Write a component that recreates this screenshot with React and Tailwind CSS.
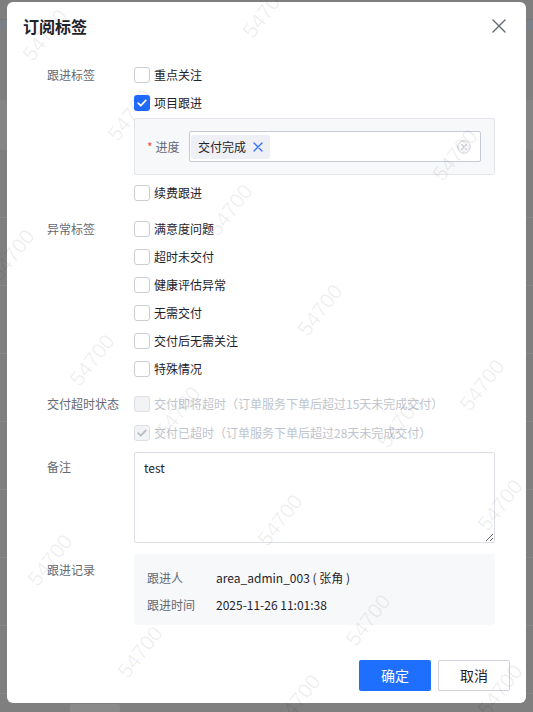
import { useState } from "react";

const marks = [
  [45, 35], [265, 12], [130, 115], [455, 155], [230, 210], [12, 255],
  [320, 310], [92, 360], [482, 385], [178, 412], [400, 422], [500, 505],
  [280, 520], [50, 560], [368, 620], [140, 652], [500, 690], [298, 700],
];

const CheckIcon = ({ color = "#fff" }) => (
  <svg width="12" height="12" viewBox="0 0 12 12" fill="none">
    <path d="M2.2 6.2 L4.8 8.7 L9.8 3.4" stroke={color} strokeWidth="1.8" strokeLinecap="round" strokeLinejoin="round" />
  </svg>
);

const Box = ({ checked, disabled }) => {
  if (disabled) {
    return (
      <span className="flex h-[16px] w-[16px] shrink-0 items-center justify-center rounded-[3px] border border-[#dcdfe6] bg-[#f2f3f5]">
        {checked && <CheckIcon color="#b8bcc4" />}
      </span>
    );
  }
  if (checked) {
    return (
      <span className="flex h-[16px] w-[16px] shrink-0 items-center justify-center rounded-[3px] bg-[#1f6bff]">
        <CheckIcon />
      </span>
    );
  }
  return <span className="h-[16px] w-[16px] shrink-0 rounded-[3px] border border-[#c9cdd4] bg-white" />;
};

const CheckRow = ({ label, checked, disabled, onClick, h = "h-[28px]" }) => (
  <div className={`flex ${h} cursor-pointer items-center gap-[4px]`} onClick={onClick}>
    <Box checked={checked} disabled={disabled} />
    <span className={disabled ? "text-[12px] text-[#c0c4cc]" : "text-[12px] text-[#1f2329]"}>{label}</span>
  </div>
);

const Label = ({ children, h = "h-[28px]" }) => (
  <div className={`flex ${h} w-[87px] shrink-0 items-center text-[12px] text-[#646a73]`}>{children}</div>
);

export default function App() {
  const [checked, setChecked] = useState({ 项目跟进: true });
  const toggle = (k) => setChecked((c) => ({ ...c, [k]: !c[k] }));
  const abnormal = ["满意度问题", "超时未交付", "健康评估异常", "无需交付", "交付后无需关注", "特殊情况"];

  return (
    <div className="relative h-[712px] w-[533px] overflow-hidden bg-[#7f7f7f] font-['Noto_Sans_CJK_SC','Noto_Sans',sans-serif]">
      {/* table behind the overlay */}
      <div className="flex flex-col">
        <div className="h-[20px] border-b border-[#767676]" />
        <div className="h-[10px] bg-[#7b7f88]" />
        <div className="h-[70px]" />
        <div className="h-[50px] bg-[#858585]" />
        {[0, 1, 2, 3, 4, 5, 6, 7, 8].map((i) => (
          <div key={i} className="h-[68px] border-b border-[#888]" />
        ))}
      </div>
      <div className="absolute left-[70px] top-[704px] h-[10px] w-[50px] rounded-[2px] bg-[#8a8a8a]" />

      {/* modal */}
      <div className="absolute left-[7px] top-[2px] flex h-[701px] w-[519px] flex-col rounded-[6px] bg-white">
        <div className="flex h-[48px] items-center justify-between pl-4 pr-[20px]">
          <span className="text-[16px] font-semibold text-[#1f2329]">订阅标签</span>
          <svg width="14" height="14" viewBox="0 0 14 14" fill="none">
            <path d="M1 1 L13 13 M13 1 L1 13" stroke="#646a73" strokeWidth="1.4" strokeLinecap="round" />
          </svg>
        </div>

        <div className="flex flex-col pl-[40px] pr-[31px] pt-[11px]">
          <div className="flex">
            <Label>跟进标签</Label>
            <div className="flex flex-1 flex-col">
              <CheckRow label="重点关注" checked={checked["重点关注"]} onClick={() => toggle("重点关注")} />
              <CheckRow label="项目跟进" checked={checked["项目跟进"]} onClick={() => toggle("项目跟进")} />
              <div className="mt-[1px] flex h-[57px] items-center rounded-[2px] border border-[#e5e6eb] bg-[#f7f8fa] pl-[12px] pr-[13px]">
                <span className="mr-[3px] text-[12px] text-[#f54a45]">*</span>
                <span className="text-[12px] text-[#646a73]">进度</span>
                <div className="ml-auto flex h-[31px] w-[292px] items-center rounded-[2px] border border-[#c4cbd7] bg-white pl-[1px]">
                  <div className="flex h-[24px] items-center gap-[7px] rounded-[2px] bg-[#eef0f6] pl-[7px] pr-[7px]">
                    <span className="text-[12px] text-[#1f2329]">交付完成</span>
                    <svg width="10" height="10" viewBox="0 0 10 10" fill="none">
                      <path d="M1 1 L9 9 M9 1 L1 9" stroke="#3370ff" strokeWidth="1.3" strokeLinecap="round" />
                    </svg>
                  </div>
                  <svg className="ml-auto mr-[9px]" width="14" height="14" viewBox="0 0 14 14" fill="none">
                    <circle cx="7" cy="7" r="6.2" stroke="#c9cdd4" strokeWidth="1" />
                    <path d="M4.8 4.8 L9.2 9.2 M9.2 4.8 L4.8 9.2" stroke="#c9cdd4" strokeWidth="1.3" strokeLinecap="round" />
                  </svg>
                </div>
              </div>
              <div className="mt-[4px]">
                <CheckRow label="续费跟进" checked={checked["续费跟进"]} onClick={() => toggle("续费跟进")} />
              </div>
            </div>
          </div>

          <div className="mt-[8px] flex">
            <Label>异常标签</Label>
            <div className="flex flex-1 flex-col">
              {abnormal.map((a) => (
                <CheckRow key={a} label={a} checked={checked[a]} onClick={() => toggle(a)} />
              ))}
            </div>
          </div>

          <div className="mt-[7px] flex">
            <Label>交付超时状态</Label>
            <div className="flex flex-1 flex-col">
              <CheckRow label="交付即将超时（订单服务下单后超过15天未完成交付）" disabled />
              <CheckRow label="交付已超时（订单服务下单后超过28天未完成交付）" disabled checked h="h-[29px]" />
            </div>
          </div>

          <div className="mt-[5px] flex">
            <Label h="h-[30px]">备注</Label>
            <textarea
              defaultValue="test"
              className="h-[91px] flex-1 resize-y rounded-[2px] border border-[#dcdfe6] px-[9px] py-[7px] text-[12px] leading-[16px] text-[#1f2329] outline-none"
            />
          </div>

          <div className="mt-[11px] flex">
            <Label h="h-[32px]">跟进记录</Label>
            <div className="flex h-[71px] flex-1 flex-col rounded-[2px] bg-[#f7f8fa] px-[13px] pt-[10px] text-[12px]">
              <div className="flex h-[27px] items-center">
                <span className="w-[69px] text-[#646a73]">跟进人</span>
                <span className="text-[#1f2329]">area_admin_003 ( 张角 )</span>
              </div>
              <div className="flex h-[27px] items-center">
                <span className="w-[69px] text-[#646a73]">跟进时间</span>
                <span className="text-[#1f2329]">2025-11-26 11:01:38</span>
              </div>
            </div>
          </div>
        </div>

        <div className="mt-auto flex justify-end gap-[7px] pb-[12px] pr-[16px]">
          <button className="h-[31px] w-[72px] rounded-[2px] bg-[#1f6fff] text-[14px] text-white">确定</button>
          <button className="h-[31px] w-[72px] rounded-[2px] border border-[#d0d3d9] bg-white text-[14px] text-[#1f2329]">取消</button>
        </div>
      </div>

      {/* watermark */}
      {marks.map(([x, y], i) => (
        <span
          key={i}
          className="pointer-events-none absolute -translate-x-1/2 -translate-y-1/2 -rotate-[52deg] select-none font-['Liberation_Sans',sans-serif] text-[21px] text-black/[0.07]"
          style={{ left: x, top: y }}
        >
          54700
        </span>
      ))}
    </div>
  );
}
